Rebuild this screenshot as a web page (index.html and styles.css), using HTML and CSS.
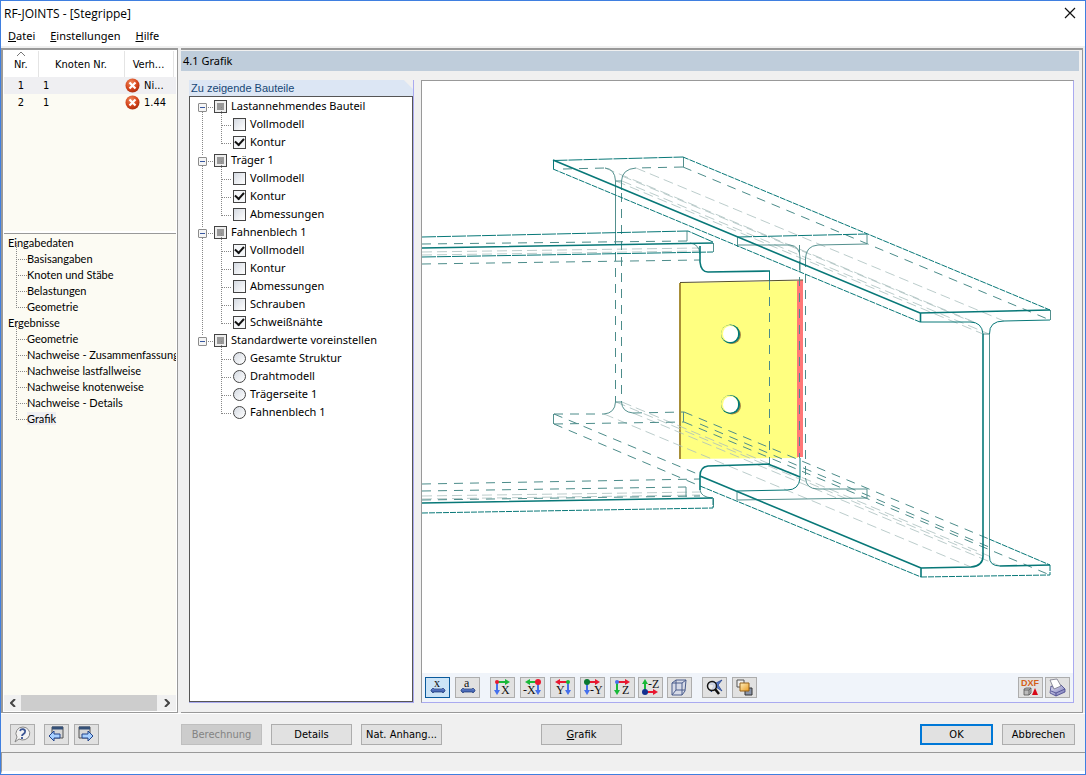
FILE: index.html
```html
<!DOCTYPE html>
<html lang="de">
<head>
<meta charset="utf-8">
<title>RF-JOINTS - [Stegrippe]</title>
<link rel="stylesheet" href="styles.css">
</head>
<body>
<svg class="defs" aria-hidden="true">
  <defs>
    <radialGradient id="red" cx="40%" cy="30%" r="75%"><stop offset="0" stop-color="#f08a5c"/><stop offset=".6" stop-color="#d4451c"/><stop offset="1" stop-color="#a82c0c"/></radialGradient>
    <linearGradient id="steel" x1="0" y1="0" x2="0" y2="1"><stop offset="0" stop-color="#6f8fd8"/><stop offset="1" stop-color="#2c4c9c"/></linearGradient>
    <linearGradient id="gold" x1="0" y1="0" x2="1" y2="1"><stop offset="0" stop-color="#fff0c0"/><stop offset="1" stop-color="#e89a20"/></linearGradient>
    <linearGradient id="print" x1="0" y1="0" x2="1" y2="1"><stop offset="0" stop-color="#e4e4f6"/><stop offset="1" stop-color="#7474b4"/></linearGradient>
    <symbol id="error" viewBox="0 0 15 15"><circle cx="7.500" cy="7.500" r="7" fill="url(#red)"/><path d="M4.500 4.500l6 6M10.500 4.500l-6 6" stroke="#fff" stroke-width="2.200"/></symbol>
    <symbol id="bone" viewBox="0 0 16 7"><path d="M1 3l2-2 1 1h8l1-1 2 2v1l-2 2-1-1H4L3 6 1 4z" fill="url(#steel)" stroke="#2c4684" stroke-width=".8"/></symbol>
    <symbol id="right" viewBox="0 0 13 6"><path d="M0 3h9" stroke="currentColor" stroke-width="2"/><path d="M8 0l5 3-5 3z" fill="currentColor"/></symbol>
    <symbol id="left" viewBox="0 0 13 6"><path d="M4 3h9" stroke="currentColor" stroke-width="2"/><path d="M5 0L0 3l5 3z" fill="currentColor"/></symbol>
    <symbol id="down" viewBox="0 0 6 14"><path d="M3 0v10" stroke="currentColor" stroke-width="2"/><path d="M0 9l3 5 3-5z" fill="currentColor"/></symbol>
    <symbol id="up" viewBox="0 0 6 14"><path d="M3 4v10" stroke="currentColor" stroke-width="2"/><path d="M0 5l3-5 3 5z" fill="currentColor"/></symbol>
  </defs>
</svg>
<div class="window">
  <header class="titlebar">
    <h1>RF-JOINTS - [Stegrippe]</h1>
    <button class="close" aria-label="Schließen"><svg viewBox="0 0 12 12"><path d="M1 1l10 10M11 1L1 11" stroke="#111" stroke-width="1.200"/></svg></button>
  </header>
  <nav class="menubar"><a href="#"><u>D</u>atei</a><a href="#"><u>E</u>instellungen</a><a href="#"><u>H</u>ilfe</a></nav>

  <main class="workspace">
    <aside class="sidebar">
      <div class="cases">
        <table>
          <thead><tr><th class="c-nr"><svg class="sort" viewBox="0 0 8 4"><path d="M0 4l4-4 4 4" fill="none" stroke="#777"/></svg>Nr.</th><th class="c-node">Knoten Nr.</th><th class="c-ratio">Verh...</th><th></th></tr></thead>
          <tbody>
            <tr class="current"><td class="c-nr">1</td><td>1</td><td class="ratio"><svg><use href="#error"/></svg>Ni...</td><td></td></tr>
            <tr><td class="c-nr">2</td><td>1</td><td class="ratio"><svg><use href="#error"/></svg>1.44</td><td></td></tr>
          </tbody>
        </table>
      </div>
      <nav class="outline">
        <ul>
          <li><a href="#">Eingabedaten</a>
            <ul><li><a href="#">Basisangaben</a></li><li><a href="#">Knoten und Stäbe</a></li><li><a href="#">Belastungen</a></li><li><a href="#">Geometrie</a></li></ul></li>
          <li><a href="#">Ergebnisse</a>
            <ul><li><a href="#">Geometrie</a></li><li><a href="#">Nachweise - Zusammenfassung</a></li><li><a href="#">Nachweise lastfallweise</a></li><li><a href="#">Nachweise knotenweise</a></li><li><a href="#">Nachweise - Details</a></li><li><a href="#" class="active">Grafik</a></li></ul></li>
        </ul>
      </nav>
      <div class="scroll">
        <button aria-label="Nach links"><svg viewBox="0 0 6 8"><path d="M5 0L1 4l4 4" fill="none" stroke="#444" stroke-width="2"/></svg></button>
        <span class="thumb"></span>
        <button aria-label="Nach rechts"><svg viewBox="0 0 6 8"><path d="M1 0l4 4-4 4" fill="none" stroke="#444" stroke-width="2"/></svg></button>
      </div>
    </aside>

    <section class="content">
      <h2>4.1 Grafik</h2>
      <div class="panes">
        <section class="parts">
          <h3>Zu zeigende Bauteile</h3>
          <ul class="tree">
            <li><label><button class="fold" aria-label="Einklappen"></button><input type="checkbox" class="mixed">Lastannehmendes Bauteil</label>
              <ul><li><label><input type="checkbox">Vollmodell</label></li><li><label><input type="checkbox" checked>Kontur</label></li></ul></li>
            <li><label><button class="fold" aria-label="Einklappen"></button><input type="checkbox" class="mixed">Träger 1</label>
              <ul><li><label><input type="checkbox">Vollmodell</label></li><li><label><input type="checkbox" checked>Kontur</label></li><li><label><input type="checkbox">Abmessungen</label></li></ul></li>
            <li><label><button class="fold" aria-label="Einklappen"></button><input type="checkbox" class="mixed">Fahnenblech 1</label>
              <ul><li><label><input type="checkbox" checked>Vollmodell</label></li><li><label><input type="checkbox">Kontur</label></li><li><label><input type="checkbox">Abmessungen</label></li><li><label><input type="checkbox">Schrauben</label></li><li><label><input type="checkbox" checked>Schweißnähte</label></li></ul></li>
            <li><label><button class="fold" aria-label="Einklappen"></button><input type="checkbox" class="mixed">Standardwerte voreinstellen</label>
              <ul><li><label><input type="radio" name="preset">Gesamte Struktur</label></li><li><label><input type="radio" name="preset">Drahtmodell</label></li><li><label><input type="radio" name="preset">Trägerseite 1</label></li><li><label><input type="radio" name="preset">Fahnenblech 1</label></li></ul></li>
          </ul>
        </section>

        <section class="viewer">
          <svg class="model" viewBox="422 81 651 592" role="img" aria-label="Anschlussmodell">
            <path d="M680 283L798 281V458L680 459z" fill="#ffff80"/>
            <path d="M797 281l6-1v177h-6z" fill="#ff7878"/>
            <path d="M680 283v176" stroke="#a88f38" stroke-width="2"/>
            <path d="M680 282.500L803 280" stroke="#55502c"/>
            <g class="hole"><ellipse cx="732" cy="335" rx="9" ry="9" fill="#a98b45"/><circle cx="730.500" cy="334" r="9.500" fill="#007878"/><circle cx="729.500" cy="333.500" r="8.500" fill="#ffff80"/><ellipse cx="730.500" cy="334" rx="7.500" ry="8" fill="#fff"/>
            <ellipse cx="732" cy="406" rx="9" ry="8.500" fill="#a98b45"/><circle cx="730.500" cy="404.500" r="9.500" fill="#007878"/><circle cx="729.500" cy="404" r="8.500" fill="#ffff80"/><ellipse cx="730.500" cy="404.500" rx="7.500" ry="8" fill="#fff"/></g>
            <g class="faint">
              <path d="M636 168L1004 321M605 168L974 322M616 181L983 334M622 181L989 334M622 176L975 323"/>
              <path d="M604 414L971 567M616 402L983 556M622 402L989 556M633 413L1000 566"/>
              <path d="M422 252L700 248M422 255L700 251M422 496L700 492M422 499L700 495"/>
            </g>
            <g class="dash">
              <path d="M683 167L1050 320M563 169L605 168M683 167L636 168M615.500 236V402M621.500 193V402M422 244L687 241M422 264L700 260"/>
              <path d="M554 414L604 414M633 413L684 412M554 424L684 422M554 414L700 475M554 424L700 486M684 412L989 539M684 422L1050 575M700 424L989 547"/>
              <path d="M422 484L700 479M422 491L686 487M422 500L700 496"/>
              <path d="M769.500 281V464M799.500 245V458M805.500 258V478"/>
            </g>
            <g class="thin">
              <path d="M615.500 181V236M621.500 181V190M605 168Q615 169 615.500 181H621.500Q622 169 636 168M604 414Q615 413 615.500 402H621.500Q622 412 633 413M553.500 414V424M683.500 412V422M683.500 157V167M687 231V241M737.500 247V237M867 234V244M738 245L790 245Q800 246 800 258V272M867 244L818 245Q806 246 805.500 258M867 489V498L737 500V491M867 489H818Q806 489 805.500 478M686 487V497M690 243Q699 244 700 254"/>
              <path d="M989.500 334V556M989.500 334H983M1050.500 310V320M713.500 243V252M713.500 498V507M700 490Q701 497 712 498"/>
            </g>
            <g class="edge">
              <path d="M553.500 160.500L683 157M553.500 160V169M422 237L688 231L713 242M422 257L713 252M738 237L867 234" stroke-dasharray="14 1"/>
              <path d="M553 169L920 322M683 157L1050 310M700 486L921 577M989 539L1050 565M921 577L1050 575V565M422 513L713 508V498" stroke-dasharray="6 1"/>
              <path d="M920 322L970 322Q982 322 983 334M1050 320L1004 321Q989 321 989.500 334M1000 566Q989 566 989.500 556M769.500 271V281M800 458V478Q799 490 787 490L737 491"/>
            </g>
            <g class="bold">
              <path d="M553 160L920 313L1050 310M920.500 313V322M422 248L713 243M422 503L713 498M700 476L921 568M921 577V568L971 567Q983 566 983 556V334M1000 566L1050 565M700 246V262Q701 272 708 272L770 271M770 464L708 466Q700 467 700 476V490M768 464L800 477"/>
            </g>
          </svg>
          <div class="tools">
            <div class="group">
              <button class="on" aria-label="Querschnitte"><svg viewBox="0 0 23 19"><text x="8" y="9">x</text><use href="#bone" x="4" y="9" width="16" height="7"/></svg></button>
              <button aria-label="Bemaßung"><svg viewBox="0 0 23 19"><text x="8" y="9">a</text><use href="#bone" x="4" y="9" width="16" height="7"/></svg></button>
            </div>
            <div class="group axes">
              <button aria-label="X"><svg viewBox="0 0 23 19"><use class="g" href="#right" x="6" y="1" width="13" height="6"/><use class="b" href="#down" x="3" y="3" width="6" height="14"/><circle class="r" cx="6" cy="4" r="2"/><text x="10" y="16">X</text></svg></button>
              <button aria-label="-X"><svg viewBox="0 0 23 19"><use class="g" href="#left" x="4" y="1" width="13" height="6"/><use class="b" href="#down" x="14" y="3" width="6" height="14"/><circle class="r" cx="17" cy="4" r="3"/><text x="2" y="16">-X</text></svg></button>
              <button aria-label="Y"><svg viewBox="0 0 23 19"><use class="r" href="#left" x="4" y="1" width="13" height="6"/><use class="b" href="#down" x="14" y="3" width="6" height="14"/><circle class="g" cx="17" cy="4" r="2"/><text x="5" y="16">Y</text></svg></button>
              <button aria-label="-Y"><svg viewBox="0 0 23 19"><use class="r" href="#right" x="6" y="1" width="13" height="6"/><use class="b" href="#down" x="3" y="3" width="6" height="14"/><circle cx="6" cy="4" r="3" fill="#087830"/><text x="9" y="16">-Y</text></svg></button>
              <button aria-label="Z"><svg viewBox="0 0 23 19"><use class="r" href="#right" x="6" y="1" width="13" height="6"/><use class="g" href="#down" x="3" y="3" width="6" height="14"/><circle class="b" cx="6" cy="4" r="2"/><text x="11" y="16">Z</text></svg></button>
            </div>
            <div class="group near">
              <button aria-label="-Z"><svg viewBox="0 0 23 19"><use class="r" href="#right" x="6" y="11" width="13" height="6"/><use class="g" href="#up" x="3" y="1" width="6" height="14"/><circle cx="6" cy="14" r="3" fill="#123090"/><text x="9" y="10">-Z</text></svg></button>
              <button aria-label="Isometrie"><svg viewBox="0 0 23 19"><path d="M4 5l4-3h10l-1 11-3 4H4zM4 5h10v12M14 5l4-3M8 2v10h9M8 12l-4 5" fill="#cbd4ee" fill-opacity=".5" stroke="#4a5c8c"/></svg></button>
            </div>
            <div class="group">
              <button aria-label="Ansicht zurücksetzen"><svg viewBox="0 0 23 19"><path d="M10 3l3 2 6-3-4 5 4 6-6-4-5 5 3-7-5-1z" fill="#5579cc" stroke="#244490" stroke-width=".8"/><circle cx="9" cy="8" r="4.500" fill="#eee" fill-opacity=".8" stroke="#151515" stroke-width="1.500"/><path d="M12 11l4 5" stroke="#111" stroke-width="2.500"/></svg></button>
              <button aria-label="Ebenen"><svg viewBox="0 0 23 19"><path d="M4 2h7v7H4z" fill="#eee" stroke="#555"/><path d="M12 10h7v7h-7z" fill="#8a94a8" stroke="#333"/><path d="M7 5h9v8H7z" fill="url(#gold)" stroke="#946018"/></svg></button>
            </div>
            <div class="group last">
              <button aria-label="DXF exportieren"><svg viewBox="0 0 23 19"><text class="dxf" x="2" y="8">DXF</text><path d="M5 11l2-1h5v5l-2 2H5zM5 12h5v5M10 12l2-2" fill="#bbb" stroke="#555" stroke-width=".8"/><path d="M13 17l3-7 3 7z" fill="#d80818"/></svg></button>
              <button aria-label="Drucken"><svg viewBox="0 0 23 19"><path d="M5 8l2 1 8-2 4 4v3l-9 4-6-3z" fill="url(#print)" stroke="#44448a" stroke-width=".8"/><path d="M4 2l7-1 4 7-7 3z" fill="#fff" stroke="#667" stroke-width=".7"/><path d="M5 13l5 2 9-4M10 15v3" fill="none" stroke="#44448a" stroke-width=".8"/></svg></button>
            </div>
          </div>
        </section>
      </div>
    </section>
  </main>

  <footer class="actions">
    <div class="icons">
      <button aria-label="Hilfe"><svg viewBox="0 0 23 19"><path d="M12 2a7 6.500 0 1 1-4 12l-4 3 2-5a7 6.500 0 0 1 6-10z" fill="#f3f3f3" stroke="#888"/><path d="M9 6c1-3 6-2 5 1 0 2-3 2-3 4M11 12v2" fill="none" stroke="#3c5694" stroke-width="1.800"/></svg></button>
      <div class="pair">
        <button aria-label="Zurück"><svg viewBox="0 0 23 19"><path d="M7 2h11v11H7z" fill="#d6d6d6" stroke="#555"/><path d="M7 3h11" stroke="#345078" stroke-width="3"/><path d="M4 11l5-5v3h6v4H9v3z" fill="#a8d0ff" stroke="#23448c"/></svg></button>
        <button aria-label="Weiter"><svg viewBox="0 0 23 19"><path d="M4 2h11v11H4z" fill="#d6d6d6" stroke="#555"/><path d="M4 3h11" stroke="#345078" stroke-width="3"/><path d="M18 11l-5-5v3H7v4h6v3z" fill="#a8d0ff" stroke="#23448c"/></svg></button>
      </div>
    </div>
    <div class="commands">
      <button disabled>Berechnung</button><button>Details</button><button>Nat. Anhang...</button><button class="apart"><u>G</u>rafik</button>
    </div>
    <div class="confirm"><button class="default">OK</button><button>Abbrechen</button></div>
  </footer>
  <div class="status"></div>
</div>
</body>
</html>
```
FILE: styles.css
```css
* { box-sizing: border-box; }
body { margin: 0; font-family: "DejaVu Sans Condensed", "Noto Sans", sans-serif; font-size: 11px; color: #000; }
h1, h2, h3, ul { margin: 0; padding: 0; font-weight: 400; list-style: none; }
a { color: inherit; text-decoration: none; }
button { padding: 0; border: 0; background: none; font: inherit; color: inherit; }
.defs { position: absolute; width: 0; height: 0; }

.window { display: flex; flex-direction: column; height: 100vh; min-height: 560px; border: 1px solid #3f7fe0; background: #f0f0f0; }
.titlebar { display: flex; align-items: center; justify-content: space-between; height: 24px; padding: 0 9px 0 3px; background: #fff; }
.titlebar h1 { font: 12px "Open Sans", sans-serif; }
.close { width: 12px; height: 12px; }
.close svg { display: block; }
.menubar { display: flex; align-items: center; gap: 15px; height: 21px; padding: 0 7px; background: #fff; font: 11px "Noto Sans", sans-serif; }

.workspace { display: grid; grid-template-columns: 177px 1fr; gap: 3px; flex: 1; min-height: 0; padding: 2px 2px 0 0; }
.sidebar { display: flex; flex-direction: column; min-height: 0; min-width: 0; padding: 1px; border: 1px solid #999; border-width: 2px 1px 1px 2px; background: #fff; }
.cases { height: 180px; background: #fcfbf3; }
table { width: 100%; table-layout: fixed; border-collapse: collapse; }
th { position: relative; height: 26px; padding: 0; background: #fff; border-right: 1px solid #e4e4e4; font-weight: 400; }
th:last-child { border: 0; }
td { height: 17px; padding: 0 0 0 5px; }
.c-nr { width: 34px; padding-left: 0; text-align: center; }
.c-node { width: 86px; }
.c-ratio { width: 49px; }
.sort { position: absolute; top: 1px; left: 13px; width: 8px; height: 4px; }
.current { background: #efeff2; }
.ratio { padding: 0 0 0 1px; white-space: nowrap; }
.ratio svg { width: 15px; height: 15px; margin: 0 4px 0 0; vertical-align: middle; }
.outline { flex: 1; min-height: 0; margin-top: 2px; padding-top: 1px; overflow: hidden; border-top: 1px solid #999; background: #fcfbf3; font: 11px/16px Lato, sans-serif; white-space: nowrap; }
.outline li { padding-left: 4px; }
.outline li li { position: relative; padding-left: 19px; }
.outline li li::before, .tree li li::before { content: ""; position: absolute; border: dotted #888; border-width: 0 0 1px 1px; }
.outline li li::before { left: 8px; top: -8px; width: 10px; height: 16px; }
.active { background: #efeff2; }
.scroll { display: grid; grid-template-columns: 17px 1fr 19px; height: 16px; background: #f0f0f0; }
.scroll button { display: grid; place-items: center; }
.scroll svg { width: 6px; height: 8px; }
.thumb { background: #cdcdcd; }

.content { display: flex; flex-direction: column; min-width: 0; min-height: 0; padding: 1px 3px 9px 0; border: 1px solid #999; border-width: 2px 1px 1px 0; }
.content h2 { height: 20px; padding-left: 2px; background: #bfcddb; font: 11px/20px "Noto Sans", sans-serif; }
.panes { display: grid; grid-template-columns: 225px 1fr; gap: 7px; flex: 1; min-height: 0; padding: 9px 5px 0 8px; }
.parts { display: flex; flex-direction: column; min-height: 0; border: solid #aaaaf0; border-width: 0 1px 1px 0; background: #fff; }
.parts h3 { height: 16px; padding-left: 2px; background: linear-gradient(225deg, #f0f0f0 6px, #dce6f4 7px); font: 11px/16px "Liberation Sans", sans-serif; color: #174776; }
.tree { flex: 1; min-height: 0; overflow: hidden; border: 1px solid #555; font: 11px/18px "Noto Sans", sans-serif; }
.tree > li { position: relative; padding-left: 8px; }
.tree > li:not(:last-child)::before { content: ""; position: absolute; left: 12px; top: 14px; bottom: -4px; border-left: 1px dotted #888; }
.tree label { display: flex; align-items: center; height: 18px; white-space: nowrap; }
.tree li li { position: relative; padding-left: 35px; }
.tree li li::before { left: 23px; top: -8px; width: 9px; height: 18px; }
.fold { position: relative; width: 9px; height: 9px; margin: 3px 7px 0 0; border: 1px solid #8c8c8c; border-radius: 1px; background: linear-gradient(90deg, #3858a0, #3858a0) center / 5px 1px no-repeat #f5f5f5; }
.fold::after { content: ""; position: absolute; left: 9px; top: 3px; width: 5px; border-top: 1px dotted #888; }
input { appearance: none; flex: none; width: 13px; height: 13px; margin: 0 4px 0 0; border: 1px solid #444; background: linear-gradient(135deg, #d5dae2, #fff); }
.mixed { background: linear-gradient(#999, #999) center / 7px 7px no-repeat #eee; }
.tree input:checked { background: #f4f6f8; display: grid; place-items: center; }
input:checked::after { content: ""; width: 7px; height: 4px; border: solid #111; border-width: 0 0 2px 2px; transform: translateY(-1px) rotate(-48deg); }
input[type="radio"] { border-radius: 50%; }

.viewer { display: flex; flex-direction: column; min-width: 0; min-height: 0; border: 1px solid #999; border-right-color: #aaaaf0; border-bottom-color: #aaaaf0; background: #fff; }
.model { flex: 1; min-height: 0; width: 100%; }
.model g { stroke: #087878; fill: none; }
.model .hole { stroke: none; }
.model .bold { stroke-width: 1.6; }
.model .edge { stroke-width: 1; }
.model .thin { stroke: #54908e; }
.model .dash { stroke: #4c8c8a; stroke-dasharray: 9 7; }
.model .faint { stroke: #a9bfbe; stroke-width: .8; stroke-dasharray: 10 5; }
.tools { display: flex; align-items: center; gap: 10px; height: 29px; padding: 0 3px; background: #f0f4fa; }
.group { display: flex; gap: 5px; }
.near { gap: 4px; margin-left: -7px; }
.last { gap: 2px; margin-left: auto; }
.group button, .icons button { width: 25px; height: 21px; border: 1px solid #adadad; background: #e1e1e1; }
.group .on { border-color: #0a5a9c; background: #cce4f7; }
.group svg, .icons svg { display: block; width: 23px; height: 19px; overflow: visible; }
.group text { font: 12px "Liberation Serif", serif; fill: #111; }
.group .dxf { font: bold 9px "Liberation Sans", sans-serif; fill: #d45f18; }
.r { color: #e81830; fill: #e81830; }
.g { color: #18b838; fill: #18b838; }
.b { color: #4470ec; fill: #4470ec; }

.actions { display: grid; grid-template-columns: 171px 1fr auto; align-items: center; height: 39px; padding: 2px 10px 0 9px; border-top: 1px solid #fff; }
.icons { display: flex; gap: 9px; }
.pair, .commands, .confirm { display: flex; gap: 9px; }
.pair { gap: 5px; }
.commands button, .confirm button { width: 81px; height: 21px; border: 1px solid #adadad; background: #e1e1e1; white-space: nowrap; }
.commands .apart { margin-left: 90px; }
.commands button:disabled { border-color: #bfbfbf; background: #ccc; color: #838383; }
.confirm button { width: 73px; }
.confirm .default { border: 2px solid #0078d7; }
.status { height: 22px; border-top: 1px solid #999; border-left: 1px solid #999; border-bottom: 3px solid #fff; }
```
